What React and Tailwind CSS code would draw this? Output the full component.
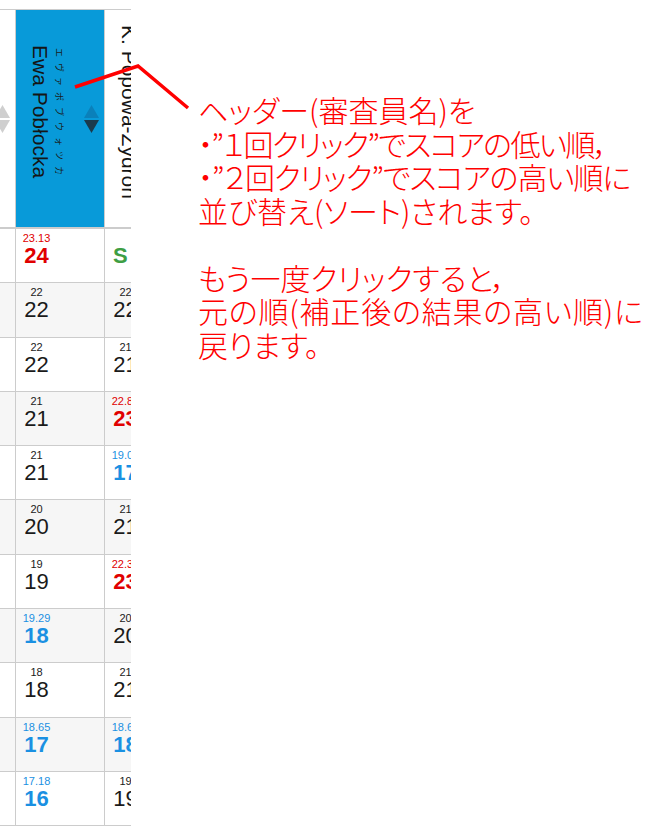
import React from "react";

const rows = [
  ["23.13", "24", "r", "", "S", "g"],
  ["22", "22", "n", "22", "22", "n"],
  ["22", "22", "n", "21", "21", "n"],
  ["21", "21", "n", "22.85", "23", "r"],
  ["21", "21", "n", "19.07", "17", "b"],
  ["20", "20", "n", "21", "21", "n"],
  ["19", "19", "n", "22.38", "23", "r"],
  ["19.29", "18", "b", "20", "20", "n"],
  ["18", "18", "n", "21", "21", "n"],
  ["18.65", "17", "b", "18.68", "18", "b"],
  ["17.18", "16", "b", "19", "19", "n"],
];

const bigTone = {
  n: "text-[#1a1a1a] font-normal",
  r: "text-[#e00000] font-bold",
  b: "text-[#1a90e2] font-bold",
  g: "text-[#3e9e44] font-bold",
};
const smallTone = {
  n: "text-[#1a1a1a]",
  r: "text-[#e00000]",
  b: "text-[#1a90e2]",
  g: "text-[#3e9e44]",
};

function Arrows({ active }) {
  return (
    <svg width="15" height="28" viewBox="0 0 15 28" className="shrink-0">
      <polygon points="7.5,0 15,13 0,13" fill={active ? "#0a80ba" : "#cfcfcf"} />
      <polygon points="0,15 15,15 7.5,28" fill={active ? "#1b3a4c" : "#cfcfcf"} />
    </svg>
  );
}

function HeaderCell({ name, ruby, active }) {
  return (
    <div
      className={
        active
          ? "w-[89px] shrink-0 h-full border-r border-[#cccccc] bg-[#089ad9] flex items-center"
          : "w-[89px] shrink-0 h-full border-r border-[#cccccc] bg-white flex items-center"
      }
    >
      <div className="flex items-stretch pl-[12px] pb-[14px]">
        <span className="[writing-mode:vertical-rl] [text-orientation:sideways] text-[21px] leading-[24px] text-[#151515] whitespace-nowrap">
          {name}
        </span>
        <div className="ml-[2px] w-[11px] flex flex-col justify-around items-center font-['Noto_Sans_CJK_JP',sans-serif] text-[#1a1a1a]">
          {ruby.split("").map((c, i) => (
            <span
              key={i}
              className="[writing-mode:vertical-rl] [text-orientation:sideways] text-[9px] leading-[11px]"
            >
              {c}
            </span>
          ))}
        </div>
      </div>
      <div className="ml-auto mr-[5px] flex">
        <Arrows active={active} />
      </div>
    </div>
  );
}

function Cell({ s, b, t, special }) {
  return (
    <div className="w-[89px] shrink-0 h-full border-r border-[#cccccc] pt-[3px]">
      <div className={special ? "w-[41px] text-left pl-[8px]" : "w-[41px] text-center"}>
        <div className={"text-[11px] leading-[13px] " + smallTone[t]}>{s || "\u00a0"}</div>
        <div className={"text-[22px] leading-[22px] " + bigTone[t]}>{b}</div>
      </div>
    </div>
  );
}

const lines = [
  ["ヘッダー(審査員名)を", "tracking-[0px]"],
  ["・”１回クリック”でスコアの低い順，", "tracking-[-1.6px]"],
  ["・”２回クリック”でスコアの高い順に", "tracking-[-1.1px]"],
  ["並び替え(ソート)されます。", "tracking-[0px]"],
  ["", "tracking-[0px]"],
  ["もう一度クリックすると，", "tracking-[0px]"],
  ["元の順(補正後の結果の高い順)に", "tracking-[0.8px]"],
  ["戻ります。", "tracking-[0px]"],
];

export default function App() {
  return (
    <div className="relative flex w-[647px] h-[836px] bg-white overflow-hidden">
      <div className="w-[131px] shrink-0 overflow-hidden pt-[9px]">
        <div className="ml-[-73px] w-[267px] font-['Liberation_Sans',sans-serif]">
          <div className="flex h-[220px] border-t border-b-2 border-[#cccccc]">
            <HeaderCell name="M. Harasiewicz" ruby="ハラシェヴィチ" active={false} />
            <HeaderCell name="Ewa Pobłocka" ruby="エヴァポブウォツカ" active={true} />
            <HeaderCell name="K. Popowa-Zydroń" ruby="ポポヴァズィドロン" active={false} />
          </div>
          {rows.map((r, i) => (
            <div
              key={i}
              className={
                i % 2 === 1
                  ? "flex h-[54.3px] border-b border-[#cccccc] bg-[#f6f6f6]"
                  : "flex h-[54.3px] border-b border-[#cccccc] bg-white"
              }
            >
              <div className="w-[89px] shrink-0 h-full border-r border-[#cccccc]" />
              <Cell s={r[0]} b={r[1]} t={r[2]} />
              <Cell s={r[3]} b={r[4]} t={r[5]} special={r[4] === "S"} />
            </div>
          ))}
        </div>
      </div>
      <div className="flex-1 pl-[67px] pt-[93px] font-['Noto_Sans_CJK_JP',sans-serif] font-light [font-feature-settings:'palt'] text-[30px] leading-[33.5px] text-[#ff0000]">
        {lines.map(([l, tr], i) => (
          <div key={i} className={"whitespace-nowrap h-[33.5px] " + tr}>
            {l}
          </div>
        ))}
      </div>
      <svg
        className="absolute left-0 top-0 pointer-events-none"
        width="647"
        height="836"
        viewBox="0 0 647 836"
      >
        <polyline
          points="75,87 138,66 188,108"
          fill="none"
          stroke="#ff0000"
          strokeWidth="3.5"
          strokeLinejoin="miter"
        />
      </svg>
    </div>
  );
}
